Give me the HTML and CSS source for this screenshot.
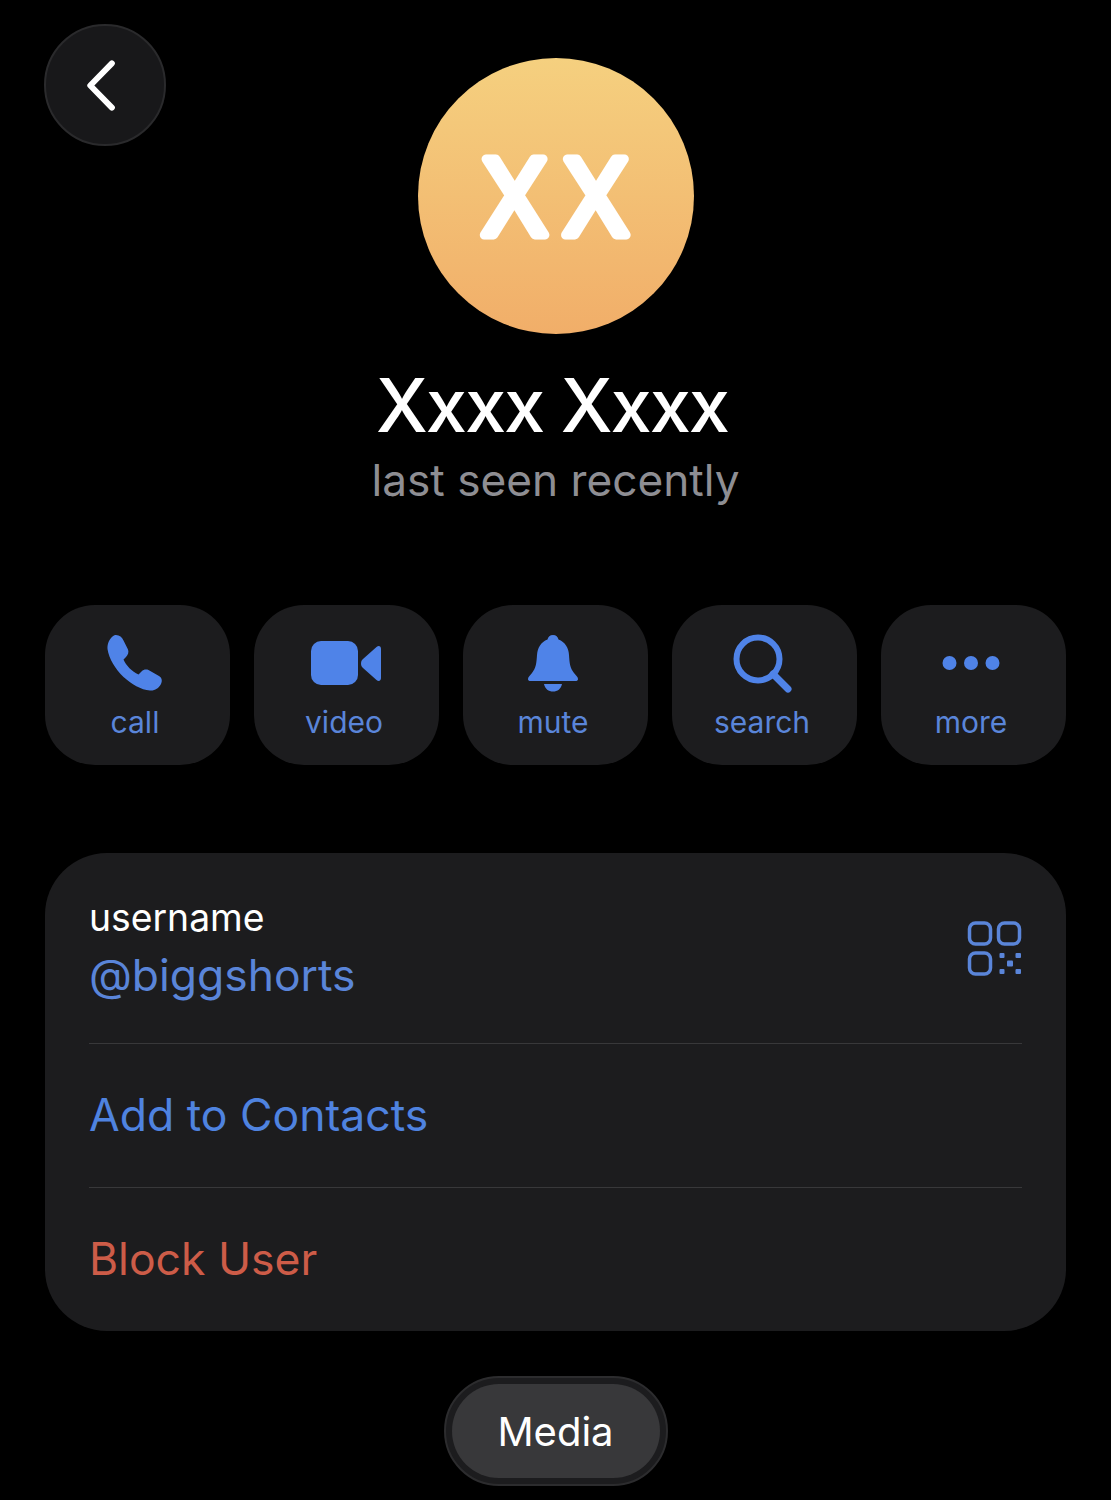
FILE: index.html
```html
<!DOCTYPE html>
<html lang="en">
<head>
<meta charset="utf-8">
<title>Profile</title>
<link rel="stylesheet" href="styles.css">
</head>
<body>
<main class="screen">
  <header class="profile">
    <button class="back" aria-label="Back">
      <svg class="back-icon" viewBox="0 0 120 120"><path d="M67 38 45 60.500 67 83"/></svg>
    </button>
    <div class="avatar">
      <svg class="avatar-text" viewBox="0 0 276 276"><text x="66" y="177">XX</text></svg>
    </div>
    <h1 class="name">Xxxx Xxxx</h1>
    <p class="status">last seen recently</p>
  </header>

  <nav class="actions">
    <a class="action">
      <svg class="action-icon" viewBox="0 0 60 60"><path d="M10 2C14 1.500 17 4 18.500 7.500L23 16.500C24 19 23 22 21 24L18.500 26.500C21 32.500 27 38.500 33.500 41.500L36.500 38.500C38.500 36.500 41 36 43.500 37L54 43C57 44.800 57.500 48 56 51C53.500 55.500 49.500 58 45 57.500C36 57 26.500 51 18.500 44C10.500 36 4 26 2.500 16C2 11 4.500 4.500 10 2Z"/></svg>
      <span class="action-label">call</span>
    </a>
    <a class="action">
      <svg class="action-icon" viewBox="0 0 80 60"><rect x="7" y="8" width="47" height="44" rx="10"/><path d="M57 30.500C57 28.500 57.500 27.500 59 26L72.500 14C75 12 77 13.500 77 16V45C77 47.500 75 49 72.500 47L59 35C57.500 33.500 57 32.500 57 30.500Z"/></svg>
      <span class="action-label">video</span>
    </a>
    <a class="action">
      <svg class="action-icon" viewBox="0 0 60 60"><path d="M30 2C33 2 35 4 35.500 6.500C42 9 45.500 14.500 46 22C46.500 30 47 35 51 40C53 42.500 55 44 55 46C55 47.500 54 48 52.500 48H7.500C6 48 5 47.500 5 46C5 44 7 42.500 9 40C13 35 13.500 30 14 22C14.500 14.500 18 9 24.500 6.500C25 4 27 2 30 2Z"/><path d="M21 51H39C38 56 34.500 58.500 30 58.500C25.500 58.500 22 56 21 51Z"/></svg>
      <span class="action-label">mute</span>
    </a>
    <a class="action">
      <svg class="action-icon" viewBox="0 0 60 60"><circle class="line" cx="26" cy="26" r="21.500"/><path class="line round" d="M41 41 56 56"/></svg>
      <span class="action-label">search</span>
    </a>
    <a class="action">
      <svg class="action-icon" viewBox="0 0 60 60"><circle cx="8.500" cy="30" r="7"/><circle cx="30" cy="30" r="7"/><circle cx="51.500" cy="30" r="7"/></svg>
      <span class="action-label">more</span>
    </a>
  </nav>

  <section class="card">
    <div class="row row-user">
      <div class="user-text">
        <div class="field-label">username</div>
        <div class="field-value">@biggshorts</div>
      </div>
      <svg class="qr" viewBox="-1.500 -1 56 56">
        <rect class="line" x="2" y="2" width="21" height="21" rx="6"/>
        <rect class="line" x="31" y="2" width="21" height="21" rx="6"/>
        <rect class="line" x="2" y="32" width="21" height="21" rx="6"/>
        <rect x="32" y="32" width="5" height="5" rx="1"/>
        <rect x="48" y="32" width="5.500" height="5" rx="1"/>
        <rect x="39.500" y="39.500" width="6" height="6" rx="1"/>
        <rect x="32" y="48" width="5" height="5" rx="1"/>
        <rect x="48" y="48" width="5.500" height="5" rx="1"/>
      </svg>
    </div>
    <div class="row row-link">Add to Contacts</div>
    <div class="row row-link row-danger">Block User</div>
  </section>

  <div class="tabs">
    <div class="tab-ring"><div class="tab">Media</div></div>
  </div>
</main>
</body>
</html>
```
FILE: styles.css
```css
* { box-sizing: border-box; }
html, body { margin: 0; padding: 0; background: #000; }
body { font-family: Inter, "Liberation Sans", sans-serif; color: #fff; }
.screen { width: 1111px; height: 1500px; padding: 58px 45px 0; overflow: hidden; background: #000; }

.profile { position: relative; display: flex; flex-direction: column; align-items: center; }
.back { position: absolute; left: -1px; top: -34px; width: 122px; height: 122px; padding: 0; border-radius: 50%; border: 2px solid #2a2a2c; background: #18181a; }
.back-icon { display: block; width: 118px; height: 118px; fill: none; stroke: #fff; stroke-width: 6; stroke-linecap: round; stroke-linejoin: round; }
.avatar { width: 276px; height: 276px; border-radius: 50%; background: linear-gradient(180deg, #f5d07f 0%, #f1ae69 100%); }
.avatar-text { display: block; width: 276px; height: 276px; }
.avatar-text text { font-family: "Open Sans", sans-serif; font-size: 106px; font-weight: 400; fill: #fff; stroke: #fff; stroke-width: 9; stroke-linejoin: round; letter-spacing: 20px; }
.name { margin: 26px 7px 0 0; font-size: 74px; line-height: 90px; font-weight: 500; letter-spacing: -2.100px; color: #fff; }
.status { margin: 3px 0 0; font-size: 44.200px; line-height: 54px; color: #8e8e93; }

.actions { display: flex; gap: 24px; margin-top: 98px; }
.action { width: 185px; height: 160px; border-radius: 50px; background: #1c1c1e; display: flex; flex-direction: column; align-items: center; padding: 28px 5px 0 0; }
.action-icon { display: block; height: 60px; width: auto; fill: #4f83e8; }
.action-icon .line { fill: none; stroke: #4f83e8; stroke-width: 6; }
.action-icon .round { stroke-linecap: round; stroke-width: 7; }
.action-label { margin-top: 11px; font-size: 30px; line-height: 36px; color: #5a85d9; }

.card { margin-top: 88px; height: 478px; border-radius: 62px; background: #1c1c1e; padding: 0 44px; display: flex; flex-direction: column; }
.row { display: flex; align-items: center; }
.row-user { height: 192px; padding-top: 2px; justify-content: space-between; border-bottom: 1px solid #38383a; }
.row-link { height: 144px; font-size: 44.500px; color: #4f83e0; border-bottom: 1px solid #38383a; }
.row-danger { color: #cd5c48; border-bottom: 0; }
.field-label { font-size: 37.300px; line-height: 44px; color: #fff; }
.field-value { font-size: 44.400px; line-height: 56px; margin-top: 7px; color: #5a85d9; }
.qr { display: block; width: 56px; height: 56px; margin-top: -2px; fill: #5a85d9; }
.qr .line { fill: none; stroke: #5a85d9; stroke-width: 3.500; }

.tabs { display: flex; justify-content: center; margin-top: 45px; }
.tab-ring { padding: 6px 6px; border-radius: 56px; background: #1c1c1e; border: 2px solid #2c2c2e; }
.tab { width: 208px; height: 94px; border-radius: 47px; background: #38383a; display: flex; align-items: center; justify-content: center; font-size: 40px; font-weight: 400; color: #fff; }
```
